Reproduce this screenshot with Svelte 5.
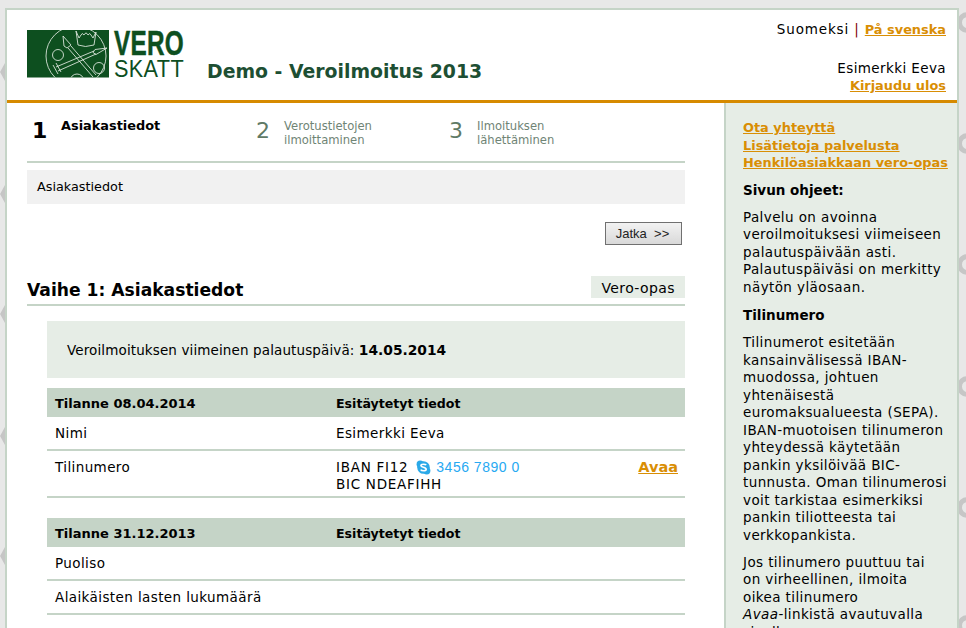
<script lang="ts">
  const leftMarks = [72, 194, 314, 436, 556];
  const rightMarks = [22, 143, 264, 386, 507, 625];

  const sections = [
    {
      date: 'Tilanne 08.04.2014',
      rows: [
        { label: 'Nimi', value: 'Esimerkki Eeva' },
        { label: 'Tilinumero', iban: true }
      ]
    },
    {
      date: 'Tilanne 31.12.2013',
      rows: [
        { label: 'Puoliso', value: '' },
        { label: 'Alaikäisten lasten lukumäärä', value: '' }
      ]
    }
  ];
</script>

<div class="backdrop">
  {#each leftMarks as y}
    <span class="mark mark--left" style="top: {y - 9}px"></span>
  {/each}
  {#each rightMarks as y}
    <span class="mark mark--right" style="top: {y - 10}px"></span>
  {/each}
</div>

<div class="page">
  <header class="header">
    <div class="brand">
      <svg class="logo" width="158" height="48" viewBox="0 0 158 48">
        <defs>
          <clipPath id="logo-box"><rect width="82" height="47.5" /></clipPath>
        </defs>
        <rect width="82" height="47.5" fill="#0d4f1f" />
        <g clip-path="url(#logo-box)" fill="none" stroke="#e4ece4" stroke-width="0.85">
          <circle cx="49" cy="26" r="30" />
          <path d="M49 1 l3 7 2-3 q1-3 3 0 q2-4 4 0 q2-3 3 0 l2 3 3-6 -2 13 q-9 3 -16 0 z" />
          <path d="M36 6 l1 10 3 2 4-3 z M41 18 L66 47 M44 16 L69 45" />
          <path d="M80 18 l-12 1.5 -2 3 3 2 z M67 21 L29 37 M69 24 L31 41 M26 35 l5 9 M29 33 l5 9" />
          <circle cx="31" cy="25" r="5.5" />
          <circle cx="72" cy="38" r="5.5" />
          <circle cx="50" cy="51" r="7" />
        </g>
        <text class="logo-vero" x="87" y="25" textLength="70" lengthAdjust="spacingAndGlyphs">VERO</text>
        <text class="logo-skatt" x="87" y="47" textLength="70" lengthAdjust="spacingAndGlyphs">SKATT</text>
      </svg>
      <h1 class="title">Demo - Veroilmoitus 2013</h1>
    </div>
    <div class="account">
      <div class="lang">Suomeksi <span class="sep">|</span> <a href="#sv">På svenska</a></div>
      <div class="user">Esimerkki Eeva</div>
      <a href="#out">Kirjaudu ulos</a>
    </div>
  </header>

  <div class="columns">
    <main class="main">
      <ol class="steps">
        <li class="step step--active step--one"><span class="step__num">1</span><span class="step__text">Asiakastiedot</span></li>
        <li class="step"><span class="step__num">2</span><span class="step__text">Verotustietojen<br />ilmoittaminen</span></li>
        <li class="step"><span class="step__num">3</span><span class="step__text">Ilmoituksen<br />lähettäminen</span></li>
      </ol>

      <div class="crumb">Asiakastiedot</div>

      <div class="actions"><button class="btn">Jatka &nbsp;&gt;&gt;</button></div>

      <div class="phase">
        <h2>Vaihe 1: Asiakastiedot</h2>
        <a class="guide" href="#guide">Vero-opas</a>
      </div>

      <div class="content">
        <p class="deadline">Veroilmoituksen viimeinen palautuspäivä: <strong>14.05.2014</strong></p>

        {#each sections as section}
          <table class="facts">
            <thead>
              <tr><th class="col-a">{section.date}</th><th class="col-b">Esitäytetyt tiedot</th><th class="col-c"></th></tr>
            </thead>
            <tbody>
              {#each section.rows as row}
                <tr>
                  <td>{row.label}</td>
                  {#if row.iban}
                    <td class="iban">
                      IBAN FI12
                      <span class="skype">
                        <svg width="15" height="15" viewBox="0 0 15 15">
                          <circle cx="4.2" cy="4.2" r="3.6" fill="#2aa9e8" />
                          <circle cx="10.8" cy="10.8" r="3.6" fill="#2aa9e8" />
                          <circle cx="7.5" cy="7.5" r="6.3" fill="#2aa9e8" />
                          <path d="M10.2 5.2 C9.4 3.9 5 3.7 4.9 5.6 C4.8 7.6 10.4 6.9 10.2 9.4 C10 11.3 5.6 11.2 4.7 9.6" fill="none" stroke="#fff" stroke-width="1.6" />
                        </svg>
                        <span class="skype__num">3456 7890 0</span>
                      </span>
                      <br />BIC NDEAFIHH
                    </td>
                    <td class="open"><a href="#open">Avaa</a></td>
                  {:else}
                    <td>{row.value}</td>
                    <td></td>
                  {/if}
                </tr>
              {/each}
            </tbody>
          </table>
        {/each}
      </div>
    </main>

    <aside class="side">
      <nav class="side__links">
        <a href="#contact">Ota yhteyttä</a>
        <a href="#info">Lisätietoja palvelusta</a>
        <a href="#opas">Henkilöasiakkaan vero-opas</a>
      </nav>
      <h3>Sivun ohjeet:</h3>
      <p>Palvelu on avoinna veroilmoituksesi viimeiseen palautuspäivään asti. Palautuspäiväsi on merkitty näytön yläosaan.</p>
      <h3>Tilinumero</h3>
      <p>Tilinumerot esitetään kansainvälisessä IBAN-muodossa, johtuen yhtenäisestä euromaksualueesta (SEPA). IBAN-muotoisen tilinumeron yhteydessä käytetään pankin yksilöivää BIC-tunnusta. Oman tilinumerosi voit tarkistaa esimerkiksi pankin tiliotteesta tai verkkopankista.</p>
      <p>Jos tilinumero puuttuu tai<br />on virheellinen, ilmoita<br />oikea tilinumero<br /><em>Avaa</em>-linkistä avautuvalla<br />sivulla.</p>
    </aside>
  </div>
</div>

<style>
  :global(html), :global(body) {
    margin: 0;
    height: 628px;
    overflow: hidden;
    background: #e8e8e8;
  }

  .backdrop {
    position: fixed;
    inset: 0;
  }

  .mark {
    position: absolute;
    display: block;
  }

  .mark--left {
    left: 0;
    width: 5px;
    height: 18px;
    background: #c6c6c6;
    clip-path: polygon(100% 0, 0 50%, 100% 100%);
  }

  .mark--right {
    left: 957px;
    width: 11px;
    height: 11px;
    border: 5px solid #c6c6c6;
    border-radius: 50%;
  }

  .page {
    position: relative;
    box-sizing: border-box;
    width: 954px;
    margin: 8px 0 0 5px;
    border: 2px solid #c5d4c7;
    border-bottom: 0;
    background: #fff;
    color: #000;
    font: 13.5px/17px "DejaVu Sans", Verdana, sans-serif;
    letter-spacing: 0.4px;
  }

  a, strong, th, h1, h2, h3 {
    letter-spacing: 0;
  }

  a {
    color: #d98e04;
    font-size: 12.9px;
    font-weight: 700;
  }

  .header {
    display: flex;
    justify-content: space-between;
    height: 90px;
    border-bottom: 3px solid #d68a00;
  }

  .brand {
    display: flex;
    align-items: flex-start;
    padding: 20px 0 0 20px;
  }

  .logo {
    display: block;
  }

  .logo-vero {
    font: 700 35px "Liberation Sans Narrow", "Liberation Sans", sans-serif;
    fill: #0d4f1f;
    stroke: #0d4f1f;
    stroke-width: 0.5;
  }

  .logo-skatt {
    font: 400 24.5px "Liberation Sans Narrow", "Liberation Sans", sans-serif;
    fill: #0d4f1f;
  }

  .title {
    margin: 30px 0 0 22px;
    color: #1d4f33;
    font-size: 18.85px;
    line-height: 24px;
    font-weight: 700;
  }

  .account {
    padding: 11px 11px 0 0;
    text-align: right;
  }

  .lang {
    letter-spacing: 0.85px;
  }

  .sep {
    color: #800000;
  }

  .user {
    margin-top: 21px;
    line-height: 18px;
  }

  .columns {
    display: flex;
    height: 525px;
    overflow: hidden;
  }

  .main {
    width: 717px;
    box-sizing: border-box;
    padding: 0 0 0 20px;
  }

  .side {
    box-sizing: border-box;
    width: 233px;
    border-left: 2px solid #c5d4c7;
    background: #e6ede6;
    padding: 16px 4px 0 17px;
  }

  .side__links a {
    display: block;
    line-height: 17.5px;
  }

  .side h3 {
    margin: 10px 0 10px;
    font-size: 13.5px;
    line-height: 17px;
  }

  .side p + h3 {
    margin-top: 11px;
  }

  .side p {
    margin: 0 0 9.5px;
    line-height: 17.5px;
  }

  .steps {
    display: flex;
    width: 658px;
    height: 58px;
    margin: 0;
    padding: 0;
    list-style: none;
    border-bottom: 2px solid #c5d4c7;
  }

  .step {
    display: flex;
    flex: none;
    width: 193px;
    padding-top: 16px;
    color: #6f8475;
    font-size: 11.6px;
    line-height: 14px;
    letter-spacing: 0;
  }

  .step--one {
    width: 223px;
    padding-top: 14px;
  }

  .step__num {
    flex: none;
    width: 28px;
    padding-left: 6px;
    margin-top: -2px;
    color: #5f7a66;
    font-size: 22px;
    line-height: 28px;
  }

  .step--active {
    color: #000;
  }

  .step--active .step__num {
    width: 29px;
    margin-top: 0;
    padding-left: 5px;
    color: #000;
    font-weight: 700;
  }

  .step--active .step__text {
    font-weight: 700;
    font-size: 12.9px;
    margin-top: 2px;
  }

  .crumb {
    width: 648px;
    height: 34px;
    margin-top: 7px;
    padding-left: 10px;
    background: #f1f1f1;
    line-height: 34px;
    font-size: 12.8px;
    letter-spacing: 0;
  }

  .actions {
    display: flex;
    justify-content: flex-end;
    width: 655px;
    margin-top: 18px;
  }

  .btn {
    width: 77px;
    height: 23px;
    padding: 0 2px 0 0;
    border: 1px solid #707070;
    background: linear-gradient(#f2f2f2, #d9d9d9);
    color: #222;
    font: 13px "Liberation Sans", Arial, sans-serif;
  }

  .phase {
    display: flex;
    justify-content: space-between;
    align-items: flex-start;
    width: 658px;
    height: 28px;
    margin-top: 31px;
    border-bottom: 2px solid #c5d4c7;
  }

  .phase h2 {
    margin: 3px 0 0;
    font-size: 17.15px;
    line-height: 22px;
  }

  .guide {
    height: 22px;
    padding: 0 10px;
    background: #e6ede6;
    color: #000;
    font-size: 14px;
    font-weight: 400;
    letter-spacing: 0.4px;
    text-decoration: none;
    line-height: 24px;
  }

  .content {
    width: 638px;
    margin: 15px 0 0 20px;
  }

  .deadline {
    height: 57px;
    margin: 0 0 10px;
    padding-left: 20px;
    background: #e6ede6;
    line-height: 58px;
    letter-spacing: 0.12px;
  }

  .deadline strong {
    font-size: 13.8px;
    letter-spacing: 0;
  }

  .facts {
    width: 638px;
    margin-bottom: 20px;
    border-collapse: collapse;
    table-layout: fixed;
  }

  .facts th {
    box-sizing: border-box;
    height: 29px;
    padding: 2px 8px 0;
    background: #c5d4c7;
    font-size: 13px;
    text-align: left;
  }

  .facts td {
    padding: 8px 8px 7px;
    border-bottom: 2px solid #c5d4c7;
    vertical-align: top;
    line-height: 17px;
  }

  .facts td.iban {
    padding-bottom: 3px;
    letter-spacing: 0.72px;
  }

  .col-a {
    width: 281px;
  }

  .facts th.col-b {
    font-size: 12.6px;
  }

  .col-c {
    width: 64px;
  }

  .facts td.open {
    text-align: right;
    padding-right: 7px;
  }

  .open a {
    font-size: 14.5px;
  }

  .skype {
    margin-left: 3px;
    white-space: nowrap;
  }

  .skype__num {
    color: #27a9f2;
    font: 14px "Liberation Sans", Arial, sans-serif;
    letter-spacing: 0.5px;
  }

  .skype svg {
    vertical-align: -3px;
  }
</style>
